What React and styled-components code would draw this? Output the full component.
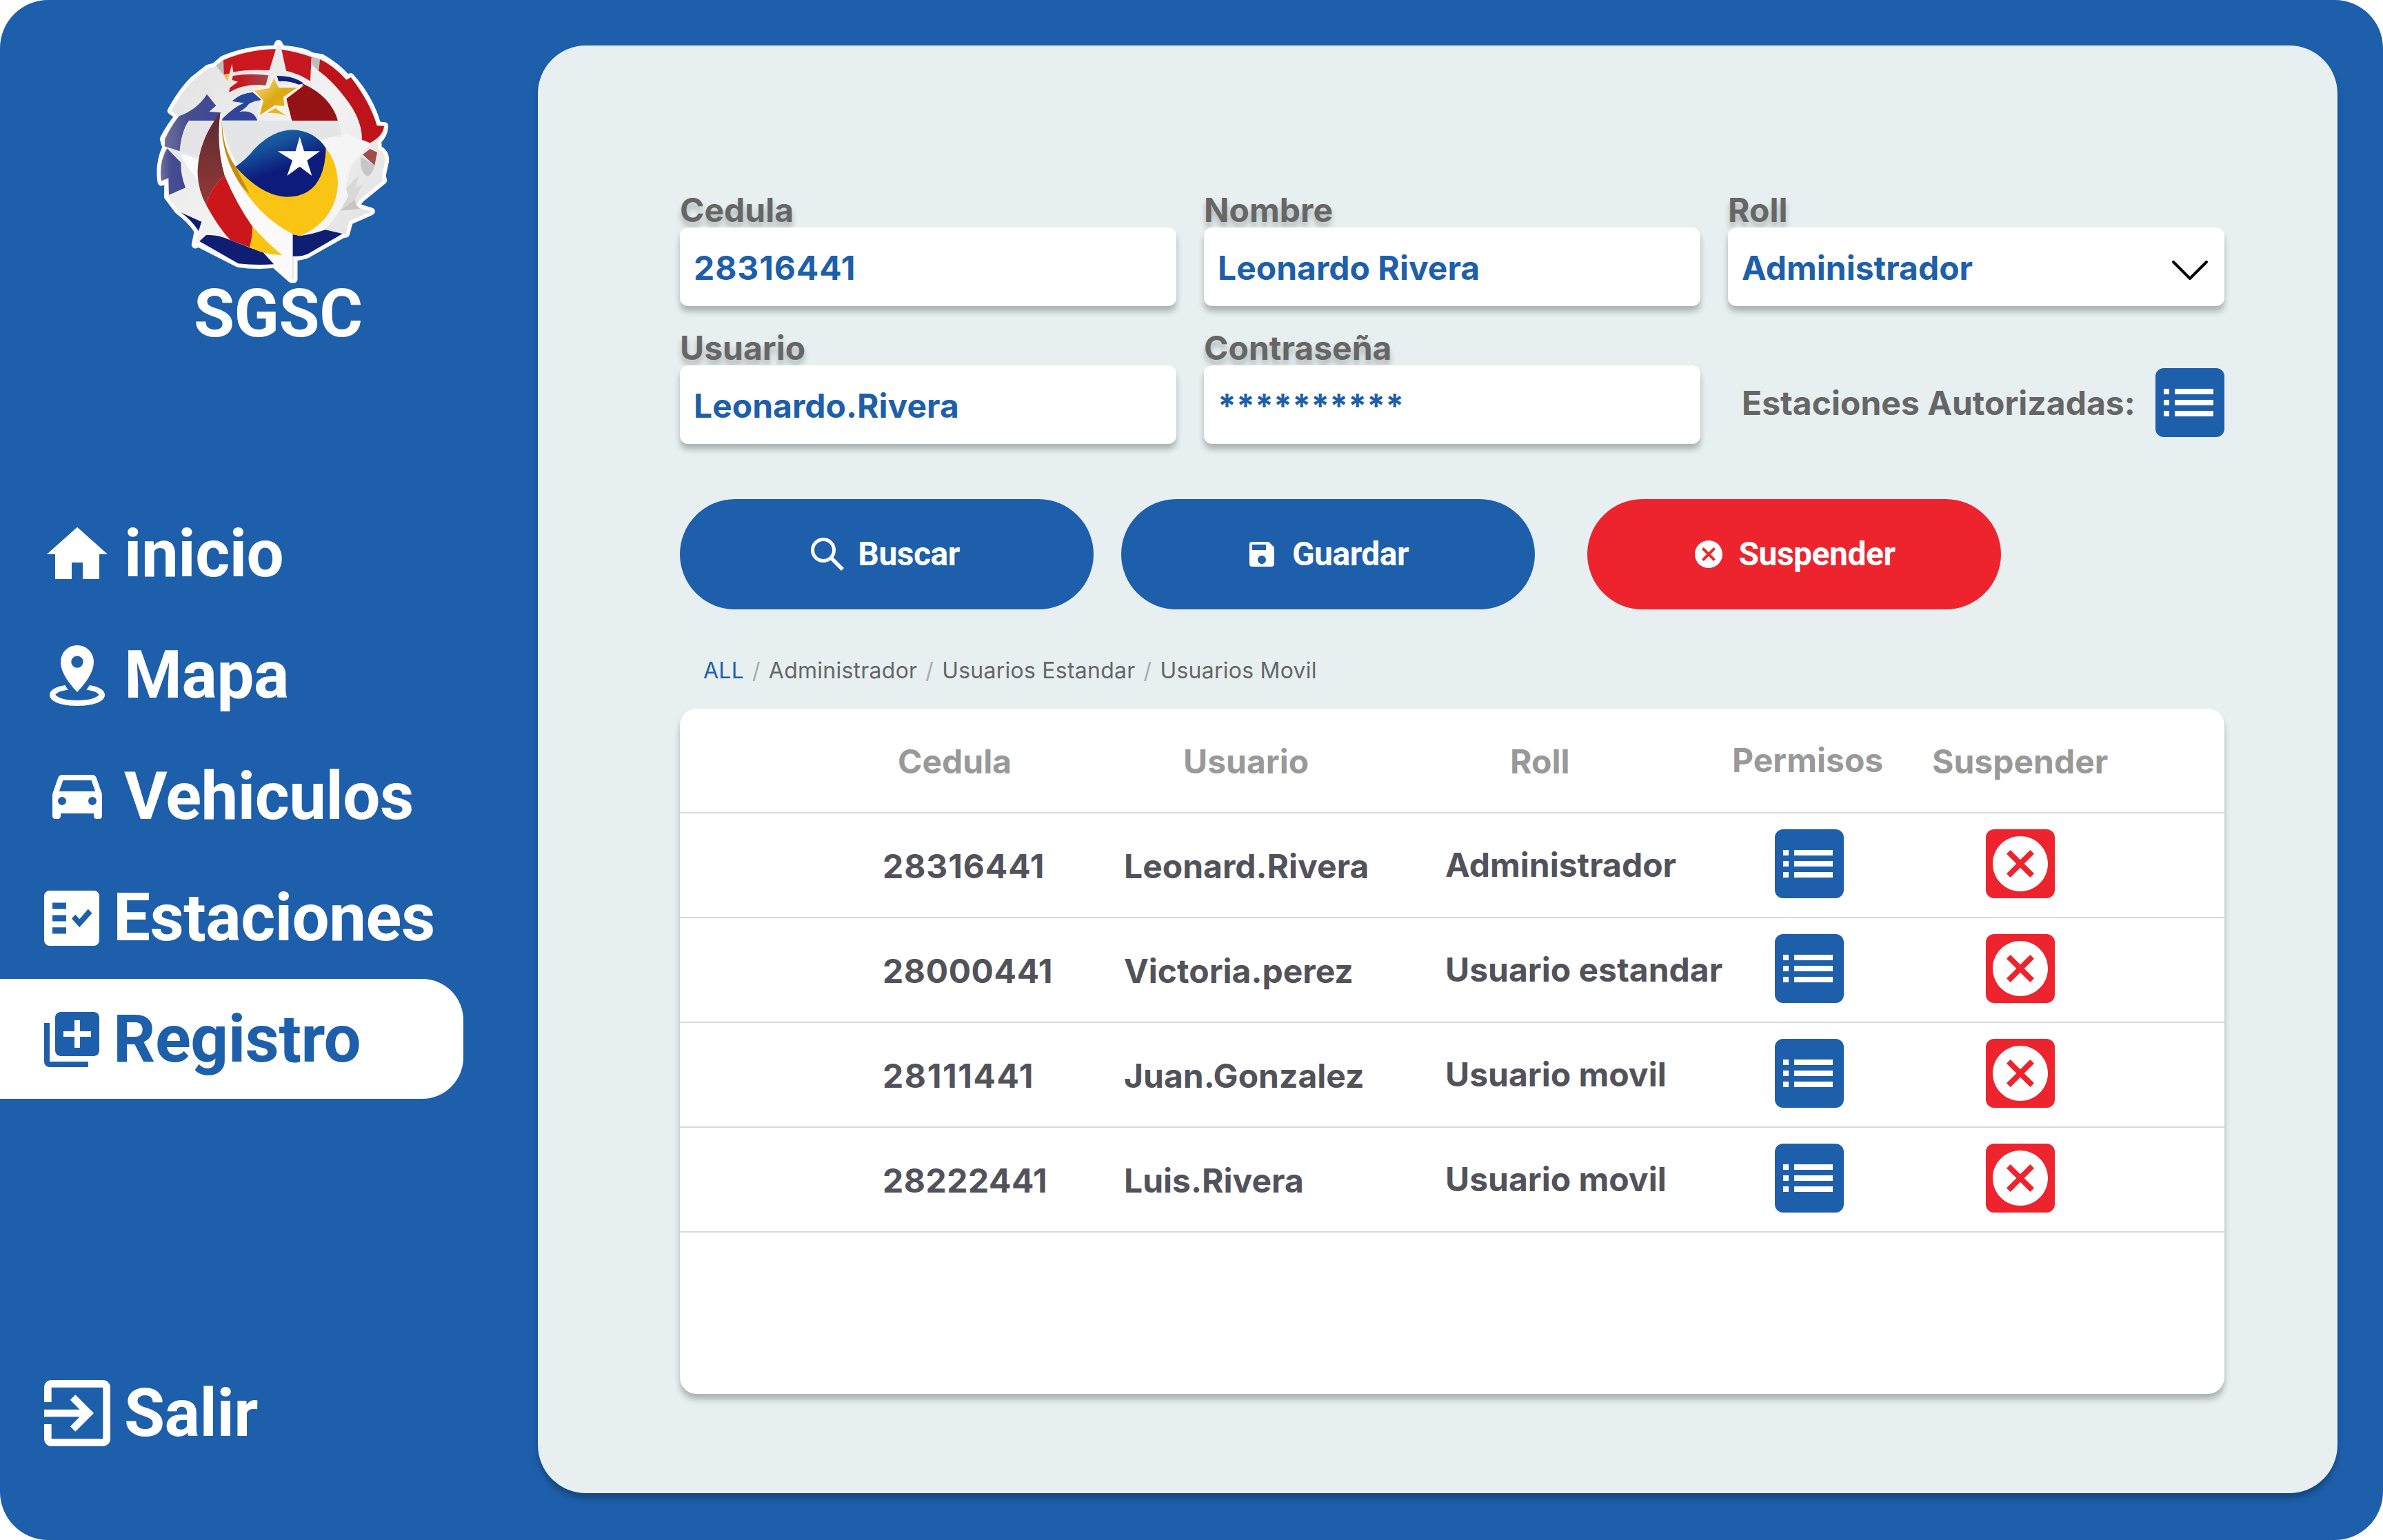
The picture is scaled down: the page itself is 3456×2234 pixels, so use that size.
import React from "react";
import styled, { createGlobalStyle } from "styled-components";
import { MdLibraryAdd, MdExitToApp, MdSave, MdCancel } from "react-icons/md";

const BLUE = "#1e5fac";
const RED = "#ed242d";
const PAGE = "#e7eff1";

const GlobalStyle = createGlobalStyle`
  * { box-sizing: border-box; }
  html, body { margin: 0; padding: 0; background: #fff; }
  body { font-family: Inter, "Liberation Sans", sans-serif; font-weight: 700; }
  button { font: inherit; border: 0; padding: 0; margin: 0; }
  svg { display: block; flex: none; }
`;

const Screen = styled.div`
  display: flex;
  width: 3456px;
  height: 2234px;
  padding: 66px 66px 68px 0;
  background: ${BLUE};
  border-radius: 70px;
  overflow: hidden;
`;

const Sidebar = styled.aside`
  display: flex;
  flex-direction: column;
  width: 780px;
  flex: none;
  margin-top: -26px;
  color: #fff;
  font-family: Roboto, "Liberation Sans", sans-serif;
  font-weight: 700;
  font-size: 96px;
  letter-spacing: -0.5px;
`;

const Brand = styled.div`
  display: flex;
  flex-direction: column;
  width: 400px;
  height: 676px;
  margin-left: 200px;
`;

const BrandName = styled.div`
  line-height: 112px;
  margin-top: -21px;
  padding-left: 81px;
  white-space: nowrap;
`;

const Nav = styled.nav`
  display: flex;
  flex-direction: column;
  gap: 2px;
`;

const NavItem = styled.a`
  display: flex;
  align-items: center;
  width: 672px;
  height: 174px;
  padding-left: ${(p) => p.$inset}px;
  gap: ${(p) => p.$gap}px;
  border-radius: 0 60px 60px 0;
  background: ${(p) => (p.$active ? "#fff" : "transparent")};
  color: ${(p) => (p.$active ? BLUE : "#fff")};
  line-height: 112px;
  white-space: nowrap;
`;

const NavGlyph = styled.span`
  display: flex;
  margin-top: ${(p) => p.$nudge}px;
`;

const Exit = styled.a`
  display: flex;
  align-items: center;
  gap: 20px;
  height: 96px;
  margin: 408px 0 0 64px;
  line-height: 112px;
`;

const Panel = styled.main`
  display: flex;
  flex-direction: column;
  width: 2610px;
  height: 2100px;
  padding: 209px 164px 0 206px;
  background: ${PAGE};
  border-radius: 70px;
  box-shadow: 0 8px 8px rgba(0, 0, 0, 0.25);
`;

const Form = styled.form`
  display: grid;
  grid-template-columns: repeat(3, 720px);
  grid-auto-rows: 169px;
  gap: 31px 40px;
  font-size: 48px;
`;

const Field = styled.label`
  display: flex;
  flex-direction: column;
`;

const FieldLabel = styled.span`
  height: 55px;
  line-height: 60px;
  color: #666;
  text-shadow: 0 8px 8px rgba(0, 0, 0, 0.25);
`;

const FieldBox = styled.span`
  position: relative;
  display: flex;
  align-items: center;
  justify-content: space-between;
  height: 114px;
  padding: 4px 22px 0 20px;
  border-radius: 12px;
  background: #fff;
  color: ${BLUE};
  line-height: 58px;
  letter-spacing: ${(p) => p.$tracking ?? 0}px;
  box-shadow: 0 8px 8px rgba(0, 0, 0, 0.25);

  svg {
    margin-top: 6px;
  }
`;

const Stations = styled.div`
  display: flex;
  align-items: center;
  justify-content: space-between;
  height: 100px;
  margin-top: 59px;
  padding-left: 20px;
  color: #666;
  white-space: nowrap;
`;

const IconButton = styled.button`
  display: flex;
  align-items: center;
  justify-content: center;
  width: 100px;
  height: 100px;
  border-radius: 12px;
  background: ${(p) => (p.$danger ? RED : BLUE)};
  color: #fff;
`;

const Actions = styled.div`
  display: flex;
  margin-top: 80px;
`;

const ActionButton = styled.button`
  display: flex;
  align-items: center;
  justify-content: center;
  gap: 20px;
  width: 600px;
  height: 160px;
  margin-right: ${(p) => p.$after ?? 0}px;
  padding-right: ${(p) => p.$trim ?? 4}px;
  border-radius: 80px;
  background: ${(p) => (p.$danger ? RED : BLUE)};
  color: #fff;
  font-family: Roboto, "Liberation Sans", sans-serif;
  font-weight: 700;
  font-size: 48px;
  line-height: 56px;
  letter-spacing: -0.5px;
`;

const Filters = styled.div`
  display: flex;
  align-items: center;
  height: 40px;
  margin: 68px 0 0 34px;
  font-size: 32px;
  font-weight: 400;
  letter-spacing: 0.25px;
  color: #666;
  white-space: nowrap;
`;

const Filter = styled.a`
  color: ${(p) => (p.$active ? BLUE : "#666")};
`;

const Slash = styled.span`
  padding: 0 12px;
  color: #aaa;
`;

const Table = styled.section`
  display: flex;
  flex-direction: column;
  width: 2240px;
  height: 994px;
  margin-top: 36px;
  border-radius: 24px;
  background: #fff;
  font-size: 48px;
  line-height: 58px;
  box-shadow: 0 8px 8px rgba(0, 0, 0, 0.25);
`;

const TableRow = styled.div`
  display: grid;
  grid-template-columns: ${(p) => (p.$head ? "414px 474px 322px 290px 1fr" : "350px 466px 478px 306px 1fr")};
  align-items: center;
  height: 152px;
  padding: ${(p) => (p.$head ? "4px 0 0 316px" : "0 0 4px 294px")};
  border-bottom: 2px solid #d9d9d9;
  color: ${(p) => (p.$head ? "#999" : "#52525b")};
  white-space: nowrap;
`;

const Cell = styled.span`
  padding-top: ${(p) => p.$drop ?? 0}px;
  padding-bottom: ${(p) => p.$lift ?? 0}px;
  letter-spacing: ${(p) => p.$tracking ?? 0}px;
`;

const HomeIcon = () => (
  <svg width="96" height="96" viewBox="0 0 24 24" fill="currentColor">
    <path d="M10 21v-6h4v6h6v-9h3L12 2.2 1 12h3v9z" />
  </svg>
);

const PinIcon = () => (
  <svg width="96" height="96" viewBox="0 0 24 24" fill="currentColor">
    <path
      fillRule="evenodd"
      d="M12 1a6 6 0 0 0-6 6c0 4.4 3.8 8.600 6 11 2.200-2.400 6-6.600 6-11a6 6 0 0 0-6-6zm0 3.850a2.180 2.180 0 1 1 0 4.360 2.180 2.180 0 0 1 0-4.360z"
    />
    <path d="M7.600 15.500C4.200 16 2 17.300 2 19c0 2.600 4.500 4 10 4s10-1.400 10-4c0-1.700-2.200-3-5.500-3.500l-1.150 1.700c2.600.300 4.150 1 4.550 1.800-.9 1.100-3.700 2-7.900 2s-7-.9-7.900-2c.4-.8 1.950-1.500 4.550-1.800z" />
  </svg>
);

const CarIcon = () => (
  <svg width="96" height="96" viewBox="0 0 24 24" fill="currentColor">
    <path
      fillRule="evenodd"
      d="M18.920 6.010C18.720 5.420 18.160 5 17.500 5h-11c-.66 0-1.210.42-1.420 1.010L3 12v8c0 .55.45 1 1 1h1c.55 0 1-.45 1-1v-1h12v1c0 .55.45 1 1 1h1c.55 0 1-.45 1-1v-8l-2.080-5.990zM6.500 16a1.500 1.500 0 1 1 0-3 1.500 1.500 0 0 1 0 3zm11 0a1.500 1.500 0 1 1 0-3 1.500 1.500 0 0 1 0 3zM5.450 11l1.400-4h10.300l1.400 4z"
    />
  </svg>
);

const ChecklistIcon = () => (
  <svg width="80" height="80" viewBox="0 0 80 80" fill="currentColor">
    <path
      fillRule="evenodd"
      d="M8 0h64a8 8 0 0 1 8 8v64a8 8 0 0 1-8 8H8a8 8 0 0 1-8-8V8a8 8 0 0 1 8-8zM12 17.500v9.200h20v-9.200zM12 35.400v9.200h20v-9.200zM12 53.300v9.200h20v-9.200zM40 40.400l11.300 12.900 18.200-20.600-5.700-6-12.500 14.600-5.900-6.600z"
    />
  </svg>
);

const ListIcon = () => (
  <svg width="100" height="100" viewBox="0 0 100 100" fill="currentColor">
    <path d="M12 30h8v8h-8zM28 30h56v8H28zM12 46h8v8h-8zM28 46h56v8H28zM12 62h8v8h-8zM28 62h56v8H28z" />
  </svg>
);

const SearchIcon = () => (
  <svg width="48" height="48" viewBox="0 0 48 48" fill="none" stroke="currentColor">
    <circle cx="18" cy="18" r="15.500" strokeWidth="5" />
    <path d="M29.500 29.500L46 46" strokeWidth="5.500" />
  </svg>
);

const ChevronIcon = () => (
  <svg width="56" height="34" viewBox="0 0 56 34" fill="none" stroke="#000" strokeWidth="4" strokeLinecap="round" strokeLinejoin="round">
    <path d="M4 5l24 24L52 5" />
  </svg>
);

const OUTLINE =
  "M612 70L625 94Q710 98 755 124L800 132Q860 165 912 222L925 215Q1010 310 1042 425L1073 428Q1070 470 1043 492L1045 528Q1078 545 1076 580L1062 645L1067 665L975 740Q940 775 965 785L1015 800L920 842L905 897L890 900L740 985Q710 998 678 997V1095H668L595 1030Q510 1038 437 1027L262 938L250 945L262 885Q230 835 175 795L130 735L132 665L102 672Q90 590 123 522L112 485Q140 430 178 385L145 362Q190 280 240 230L305 178L335 170L372 138Q480 94 600 94Z";

const Emblem = () => (
  <svg width="400" height="380" viewBox="0 0 1200 1140">
    <defs>
      <linearGradient id="eye" x1="0.2" y1="0" x2="0.6" y2="0.8">
        <stop offset="0" stopColor="#1a6fa8" />
        <stop offset="0.35" stopColor="#15509a" />
        <stop offset="0.75" stopColor="#0c1b7c" />
      </linearGradient>
      <linearGradient id="leaf" x1="0" y1="0" x2="0" y2="1">
        <stop offset="0" stopColor="#5a2a30" />
        <stop offset="1" stopColor="#963836" />
      </linearGradient>
      <linearGradient id="gold" x1="0" y1="0" x2="1" y2="1">
        <stop offset="0.15" stopColor="#f3cf63" />
        <stop offset="0.5" stopColor="#dba915" />
        <stop offset="1" stopColor="#f0b91c" />
      </linearGradient>
      <linearGradient id="ribbon" x1="0" y1="0" x2="1" y2="0">
        <stop offset="0.3" stopColor="#c51a21" />
        <stop offset="1" stopColor="#a24a4a" />
      </linearGradient>
      <linearGradient id="slate" x1="0" y1="0" x2="1" y2="0">
        <stop offset="0" stopColor="#6e7097" />
        <stop offset="0.4" stopColor="#474e92" />
        <stop offset="1" stopColor="#3d4794" />
      </linearGradient>
      <linearGradient id="body" x1="0" y1="0" x2="1" y2="1">
        <stop offset="0" stopColor="#dedede" />
        <stop offset="0.5" stopColor="#f3f3f3" />
        <stop offset="1" stopColor="#dcdcdc" />
      </linearGradient>
    </defs>
    <path d={OUTLINE} fill="#fff" stroke="#fff" strokeWidth="33" strokeLinejoin="round" />
    <path d={OUTLINE} fill="url(#body)" />
    <path d="M340 166L371 140L373 207Z" fill="#bcbcbc" />
    <path d="M755 126L792 138L788 192L756 158Z" fill="#bdbdbd" />
    <path d="M372 142Q480 95 600 94L572 186Q480 180 415 194L409 158L398 200L374 205Z" fill="#cb1820" />
    <path d="M625 96Q690 105 755 128L750 233Q700 200 645 188Z" fill="#c61820" />
    <path d="M374 208L398 202L390 234Z" fill="#f0bd4b" />
    <path d="M792 138Q850 165 907 227L927 217Q1010 325 1040 427L1071 428Q1068 470 1010 502L975 488Q975 400 905 310Q850 235 787 188Z" fill="#bf131b" />
    <path d="M720 245Q840 300 870 405H670L644 308Z" fill="#941215" />
    <path d="M605 210Q680 210 722 244L700 248Q655 230 612 234Z" fill="#12207d" />
    <path d="M413 210Q490 198 568 208L556 252Q470 240 396 282L400 262L435 236L410 228Z" fill="url(#ribbon)" />
    <path d="M366 404L368 396Q420 345 462 328L410 320Q450 285 500 283L535 312L518 404Z" fill="#33459a" />
    <path d="M440 367Q470 352 484 330Q510 318 535 316L518 400Q500 356 440 367Z" fill="#e8e8ee" />
    <path d="M410 320Q450 285 500 283L532 312Q500 318 478 335L440 367Q452 345 462 328Z" fill="#24489b" />
    <path d="M590 206L608 250L722 252L646 310L668 402L598 354L518 400L534 312L495 268L570 250Z" fill="#f7f3ea" />
    <path d="M592 220L612 262L692 262L633 302L637 342L596 338L530 381L546 318L506 274L572 264Z" fill="url(#gold)" />
    <path d="M598 350L645 384Q605 368 562 372Z" fill="#eab51c" />
    <path d="M300 290L340 340L310 366L360 370L345 405H222Q190 450 182 538L116 517L118 485Q150 420 180 385Q260 355 300 290Z" fill="url(#slate)" />
    <path d="M127 526L187 587Q185 640 207 697L135 728L133 655L102 667Q90 590 127 526Z" fill="url(#slate)" />
    <path d="M366 406H872L886 465L800 490Q740 445 675 445Q590 445 510 525Q470 575 425 605Q370 530 366 406Z" fill="#e4e5e7" />
    <path d="M222 406H345Q285 480 266 565L182 538Q190 450 222 406Z" fill="#e4e4e8" />
    <path d="M187 552Q220 555 262 575L258 660Q205 600 187 552Z" fill="#fbfbfb" />
    <path d="M800 492Q850 465 880 480L905 460L1010 508L945 575Q915 620 905 700L925 720L880 795Q840 850 815 880L720 905Q870 830 870 680Q865 580 800 492Z" fill="#f5f5f5" />
    <path d="M905 702L963 638L945 700L980 680L945 748L880 795L915 735Z" fill="#d9d8d8" />
    <path d="M880 797L945 748L948 772L968 788Z" fill="#c9c4c2" />
    <path d="M970 562L1030 600Q1020 640 1000 648Q962 630 970 562Z" fill="#c6c6c8" />
    <path d="M978 553L1010 528L1041 543L1030 600Z" fill="#a24d4b" />
    <path d="M358 370Q265 490 260 620Q258 700 297 772Q320 690 378 645Q345 530 358 370Z" fill="url(#leaf)" />
    <path d="M378 645Q320 690 297 772Q350 870 402 925L487 956Q500 910 498 865Q430 760 378 645Z" fill="#cb161b" />
    <path d="M187 805L277 845L264 885Q230 835 187 805Z" fill="#0f1e72" />
    <path d="M268 930L297 903Q350 900 402 925L485 957L545 978L592 1030Q510 1035 437 1027Z" fill="#0f1e72" />
    <path d="M674 900L705 907Q760 900 815 880L890 897L740 985Q710 998 674 995Z" fill="#0f1e72" />
    <path d="M358 375L365 400Q380 600 672 895V1096L592 1030L545 978L627 990Q560 935 498 865Q430 770 378 645Q340 520 358 375Z" fill="#fafafa" />
    <path d="M498 865Q560 935 627 990Q580 988 540 978L485 957Q500 910 498 865Z" fill="#fac414" />
    <path d="M365 398C367 480 385 550 425 605Q540 720 650 737Q800 735 818 525Q870 590 870 680Q860 840 705 906L672 898Q540 830 450 690C385 590 362 500 365 398Z" fill="#fac414" />
    <path d="M365 398C367 480 385 550 425 605L485 722Q455 700 435 665C385 580 362 500 365 398Z" fill="#c98a1c" />
    <path d="M425 605Q470 575 510 525Q590 445 675 445Q770 450 818 525Q812 735 650 737Q540 735 425 605Z" fill="url(#eye)" />
    <path d="M704 475L723 538H792L736 578L757 645L704 605L649 645L672 578L608 538H686Z" fill="#fff" />
  </svg>
);

const navItems = [
  { label: "inicio", icon: <HomeIcon />, inset: 64, gap: 20, nudge: 2 },
  { label: "Mapa", icon: <PinIcon />, inset: 64, gap: 20, nudge: 2 },
  { label: "Vehiculos", icon: <CarIcon />, inset: 64, gap: 20, nudge: -6 },
  { label: "Estaciones", icon: <ChecklistIcon />, inset: 64, gap: 20, nudge: 2 },
  { label: "Registro", icon: <MdLibraryAdd size={96} />, inset: 56, gap: 12, nudge: 2, active: true },
];

const fields = [
  { label: "Cedula", value: "28316441", tracking: 0.9 },
  { label: "Nombre", value: "Leonardo Rivera" },
  { label: "Roll", value: "Administrador", select: true },
  { label: "Usuario", value: "Leonardo.Rivera" },
  { label: "Contraseña", value: "**********", tracking: 0.2 },
];

const users = [
  { id: "28316441", tracking: 0.9, name: "Leonard.Rivera", role: "Administrador" },
  { id: "28000441", tracking: 0.6, name: "Victoria.perez", role: "Usuario estandar" },
  { id: "28111441", tracking: 1.6, name: "Juan.Gonzalez", role: "Usuario movil" },
  { id: "28222441", tracking: 0.5, name: "Luis.Rivera", role: "Usuario movil" },
];

const filters = ["ALL", "Administrador", "Usuarios Estandar", "Usuarios Movil"];

export default function App() {
  return (
    <>
      <GlobalStyle />
      <Screen>
        <Sidebar>
          <Brand>
            <Emblem />
            <BrandName>SGSC</BrandName>
          </Brand>
          <Nav>
            {navItems.map((n) => (
              <NavItem key={n.label} $active={n.active} $inset={n.inset} $gap={n.gap}>
                <NavGlyph $nudge={n.nudge}>{n.icon}</NavGlyph>
                {n.label}
              </NavItem>
            ))}
          </Nav>
          <Exit>
            <MdExitToApp size={96} viewBox="3 3 18 18" />
            Salir
          </Exit>
        </Sidebar>
        <Panel>
          <Form>
            {fields.map((f) => (
              <Field key={f.label}>
                <FieldLabel>{f.label}</FieldLabel>
                <FieldBox $tracking={f.tracking}>
                  {f.value}
                  {f.select && <ChevronIcon />}
                </FieldBox>
              </Field>
            ))}
            <Stations>
              Estaciones Autorizadas:
              <IconButton type="button">
                <ListIcon />
              </IconButton>
            </Stations>
          </Form>
          <Actions>
            <ActionButton type="button" $after={40} $trim={4}>
              <SearchIcon />
              Buscar
            </ActionButton>
            <ActionButton type="button" $after={76} $trim={3}>
              <MdSave size={48} />
              Guardar
            </ActionButton>
            <ActionButton type="button" $danger $trim={2}>
              <MdCancel size={48} />
              Suspender
            </ActionButton>
          </Actions>
          <Filters>
            {filters.map((f, i) => (
              <React.Fragment key={f}>
                {i > 0 && <Slash>/</Slash>}
                <Filter $active={i === 0}>{f}</Filter>
              </React.Fragment>
            ))}
          </Filters>
          <Table>
            <TableRow $head>
              <Cell>Cedula</Cell>
              <Cell>Usuario</Cell>
              <Cell>Roll</Cell>
              <Cell $lift={4}>Permisos</Cell>
              <Cell>Suspender</Cell>
            </TableRow>
            {users.map((u) => (
              <TableRow key={u.id}>
                <Cell $drop={7} $tracking={u.tracking}>{u.id}</Cell>
                <Cell $drop={7}>{u.name}</Cell>
                <Cell $drop={3}>{u.role}</Cell>
                <IconButton type="button">
                  <ListIcon />
                </IconButton>
                <IconButton type="button" $danger>
                  <MdCancel size={96} />
                </IconButton>
              </TableRow>
            ))}
          </Table>
        </Panel>
      </Screen>
    </>
  );
}
